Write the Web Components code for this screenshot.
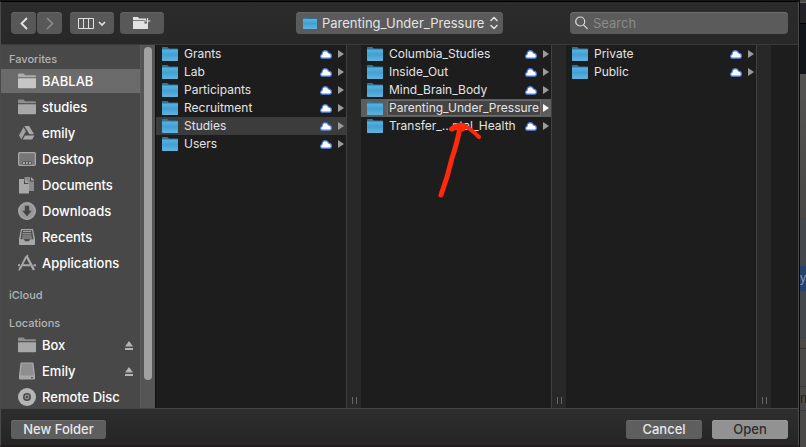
<!DOCTYPE html>
<html lang="en">
<head>
<meta charset="utf-8">
<title>Open</title>
<style>
html, body { margin: 0; height: 100%; background: #151515; }
body { font-family: Inter, "Liberation Sans", sans-serif; font-size: 13px; color: #e4e4e4; }
</style>
</head>
<body>
<open-dialog></open-dialog>
<script>
const base = `*{box-sizing:border-box} button,a,input,select{font:inherit;color:inherit;text-decoration:none;border:0;background:none;padding:0;margin:0;outline:0}svg{display:block;flex:none}`;

const sideFolder = `<svg width="18" height="16" viewBox="0 0 18 16"><path d="M0 1.5Q0 .5 1 .5h4.5l1.5 1.7h10q1 0 1 1v1H0z" fill="currentColor" opacity=".72"/><path d="M0 5.2h18v9q0 1-1 1H1q-1 0-1-1z" fill="currentColor"/></svg>`;
const ICONS = {
  folder: sideFolder,
  drive: `<svg width="18" height="16" viewBox="0 0 18 16"><path d="M6.3 1h4.800l5 8.300h-4.600z" fill="currentColor"/><path d="M5.500 2.200l2.400 4.100-4.600 8.200L1 10.300z" fill="currentColor" opacity=".9"/><path d="M7 10.400h9.500l-2.400 4.200H4.700z" fill="currentColor"/></svg>`,
  desktop: `<svg width="18" height="16" viewBox="0 0 18 16"><rect x=".6" y="1.6" width="16.8" height="12.8" rx="1.2" fill="#777" stroke="currentColor" stroke-width="1.2"/><path d="M4.500 10.500h9v3h-9z" fill="#444"/><path d="M5 11h2v2H5zM8 11h2v2H8zM11 11h2v2h-2z" fill="currentColor"/></svg>`,
  documents: `<svg width="18" height="18" viewBox="0 0 18 18"><path d="M6.500 1H12v4.500h4V15h-5V8.500L7.500 5h-1z" fill="currentColor" opacity=".7"/><path d="M13 1l3.500 3.500H13z" fill="currentColor"/><path d="M1 3h5v5h5v9.500H1z" fill="currentColor"/><path d="M7 3l4 4H7z" fill="currentColor"/></svg>`,
  downloads: `<svg width="18" height="18" viewBox="0 0 18 18"><circle cx="9" cy="9" r="8.300" fill="#999" stroke="currentColor" stroke-width="1.400"/><path d="M6.800 3.800h4.400v5h2.600L9 14.200 4.200 8.800h2.600z" fill="#444"/></svg>`,
  recents: `<svg width="18" height="18" viewBox="0 0 18 18"><path d="M3 1h12l2 10v5q0 1-1 1H2q-1 0-1-1v-5z" fill="currentColor"/><path d="M3.900 2.200h10.200l1.300 9H12l-1 2H7l-1-2H2.600z" fill="#4a4a4a"/><path d="M5 3.600h8M4.600 5.800h8.800M4.300 8h9.400M4 10h10" stroke="currentColor" stroke-width="1"/></svg>`,
  applications: `<svg width="18" height="18" viewBox="0 0 18 18" fill="none" stroke="currentColor"><path d="M8 3L2 15" stroke-width="1.800"/><path d="M8.500 2l6.200 11.500 1.300 2.500" stroke-width="2.400"/><path d="M4.500 11.200h8M0 11.200h2.200M15.500 11.200H18" stroke-width="2"/><path d="M2 13.500L1 16.500M10 1L8 3" stroke-width="1.500"/></svg>`,
  disk: `<svg width="18" height="18" viewBox="0 0 18 18"><path d="M3.500.5h11q1 0 1.100 1L17 13.500v3q0 1-1 1H2q-1 0-1-1v-3L2.400 1.500q.1-1 1.100-1z" fill="currentColor"/><path d="M3.800 1.500h10.400l1.400 12H2.400z" fill="#8e8e8e"/><path d="M13 15.200h2v1h-2z" fill="#444"/></svg>`,
  disc: `<svg width="18" height="18" viewBox="0 0 18 18"><circle cx="9" cy="9" r="9" fill="#b5b5b5"/><circle cx="9" cy="9" r="3.200" fill="#999" stroke="#4a4a4a" stroke-width="1.600"/><circle cx="9" cy="9" r="1.300" fill="#4a4a4a"/></svg>`
};
const blueFolder = (w, h) => `<svg width="${w}" height="${h}" viewBox="0 0 16 14" preserveAspectRatio="none"><defs><linearGradient id="g" x2="0" y2="1"><stop stop-color="#57b4e4"/><stop offset=".45" stop-color="#43a0d3"/><stop offset="1" stop-color="#62b3de"/></linearGradient></defs><path d="M0 .7Q0 0 .7 0h4.600l1.700 1.400h8.300q.7 0 .7.700V4H0z" fill="#2f7598"/><path d="M0 2.400h16V13.300q0 .7-.7.700H.7Q0 14 0 13.300z" fill="url(#g)"/></svg>`;

function define(name, css, html) {
  customElements.define(name, class extends HTMLElement {
    connectedCallback() {
      const t = document.createElement('template');
      t.innerHTML = `<style>${base}${css}</style>${typeof html === 'function' ? html(this) : html}`;
      this.attachShadow({ mode: 'open' }).append(t.content.cloneNode(true));
    }
  });
}

define('push-button', `
:host{display:block}
button{display:flex;align-items:center;justify-content:center;width:100%;min-height:19px;border-radius:3px;background:#5e5e5e;box-shadow:inset 0 1px #6c6c6c;color:#e8e8e8;font-weight:500}
:host([kind=default]) button{background:#929292;box-shadow:inset 0 1px #9c9c9c;color:#2c2c2c}
:host([kind=tool]) button{background:#585858;box-shadow:inset 0 1px #656565;min-height:22px;border-radius:4px}
`, el => `<button type="button" aria-label="${el.getAttribute('label') || el.textContent}"><slot></slot></button>`);

define('path-popup', `
:host{display:block}
label{display:flex;align-items:center;height:22px;gap:5px;padding:0 5px 0 7px;border-radius:4px;background:#5b5b5b;box-shadow:inset 0 1px #676767}
select{appearance:none;width:163px;flex:1}
`, `<label>${blueFolder(14, 12)}<select aria-label="Folder"><option>Parenting_Under_Pressure</option></select><svg width="8" height="14" viewBox="0 0 8 14" fill="none" stroke="#e4e4e4" stroke-width="1.500" stroke-linecap="round" stroke-linejoin="round"><path d="M1 4.500l3-3 3 3M1 9.500l3 3 3-3"/></svg></label>`);

define('search-box', `
:host{display:block}
label{display:flex;align-items:center;height:22px;gap:5px;padding:0 5px;border-radius:4px;background:#5b5b5b;box-shadow:inset 0 1px #707070}
input{flex:1;min-width:0}
input::placeholder{color:#8b8b8b;opacity:1}
`, `<label><svg width="13" height="14" viewBox="0 0 13 14" fill="none" stroke="#ddd" stroke-width="1.200" stroke-linecap="round"><circle cx="5.200" cy="5.500" r="4.500"/><path d="M8.500 8.900l3.800 3.800"/></svg><input type="search" placeholder="Search" aria-label="Search"></label>`);

define('dialog-toolbar', `
:host{display:grid;grid-template-columns:1fr auto 1fr;align-items:center;height:42px;padding:0 10px;background:linear-gradient(#2b2b2b,#282828)}
.tools{display:flex}
.nav{width:25px}.nav+.nav{margin-left:1px}
.wide{width:44px;margin-left:8px}.wide+.wide{margin-left:6px}
search-box{justify-self:end;width:218px}
`, `
<div class="tools">
<push-button class="nav" kind="tool" label="Back"><svg width="8" height="13" viewBox="0 0 8 13" fill="none" stroke="#e6e6e6" stroke-width="1.800"><path d="M7 1L1.500 6.500 7 12"/></svg></push-button>
<push-button class="nav" kind="tool" label="Forward"><svg width="8" height="13" viewBox="0 0 8 13" fill="none" stroke="#8c8c8c" stroke-width="1.600"><path d="M1 1l5.500 5.500L1 12"/></svg></push-button>
<push-button class="wide" kind="tool" label="Column view"><svg width="28" height="11" viewBox="0 0 28 11" fill="none" stroke="#e0e0e0"><path d="M.5.5h15v10H.5zM5.500.5v10M10.500.5v10"/><path d="M21 4l3 3 3-3" stroke-width="1.700"/></svg></push-button>
<push-button class="wide" kind="tool" label="New folder"><svg width="18" height="12" viewBox="0 0 18 12"><path d="M0 0h5l1 1.500h7v1.700H0zM0 4h11.500v2.500H15V12H0z" fill="#e2e2e2"/><path d="M14.500 1v6M11.500 4h6" stroke="#e2e2e2" stroke-width="1.200"/></svg></push-button>
</div>
<path-popup></path-popup>
<search-box></search-box>`);

define('side-item', `
:host{display:block;padding:1px 0}
a{display:flex;align-items:center;height:24px;padding:0 7px 0 17px;color:#fff;font-weight:500}
.icon{display:grid;place-items:center;width:18px;margin-right:6px;color:#a8a8a8}
.name{flex:1;white-space:nowrap}
:host([selected]) a{background:#6b6b6b}
:host([selected]) .icon{color:#c6c6c6}
`, el => `<a href="#"><span class="icon">${ICONS[el.getAttribute('icon')]}</span><span class="name"><slot></slot></span>${el.hasAttribute('eject') ? '<svg width="8" height="9" viewBox="0 0 8 9" fill="#b4b4b4"><path d="M4 0l4 5.500H0zM0 7h8v2H0z"/></svg>' : ''}</a>`);

define('side-group', `
:host{display:block}
h2{margin:0;padding:8px 8px 2px;font-size:11px;line-height:14px;font-weight:500;color:#b4b4b4}
:host([first]) h2{padding-top:7px}
`, el => `<h2>${el.getAttribute('label')}</h2><slot></slot>`);

define('side-bar', `
:host{display:flex;min-height:0;overflow:hidden;background:#484848;border-right:1px solid #111}
nav{flex:1;display:flex;flex-direction:column;border-right:1px solid #5c5c5c}
.track{width:14px;padding:2px 3px 28px;background:#555}
.thumb{height:100%;border-radius:4px;background:#a1a1a1}
side-group{flex:none}
.cloud{margin:4px 0}
`, `
<nav aria-label="Sidebar">
<side-group label="Favorites" first>
<side-item icon="folder" selected>BABLAB</side-item>
<side-item icon="folder">studies</side-item>
<side-item icon="drive">emily</side-item>
<side-item icon="desktop">Desktop</side-item>
<side-item icon="documents">Documents</side-item>
<side-item icon="downloads">Downloads</side-item>
<side-item icon="recents">Recents</side-item>
<side-item icon="applications">Applications</side-item>
</side-group>
<side-group class="cloud" label="iCloud"></side-group>
<side-group label="Locations">
<side-item icon="folder" eject>Box</side-item>
<side-item icon="disk" eject>Emily</side-item>
<side-item icon="disc">Remote Disc</side-item>
</side-group>
</nav>
<div class="track"><div class="thumb"></div></div>`);

define('file-row', `
:host{display:block;font-size:12px}
button{display:flex;align-items:center;width:100%;height:18px;padding:0 2px 0 6px;text-align:left}
:host([open]) button{background:#3c3c3c}
:host([current]) button{background:#5d5d5d}
.name{flex:1;min-width:0;margin-left:4px;padding:0 2px;line-height:18px;white-space:nowrap}
:host([current]) .name{margin-right:2px;line-height:16px;background:#444;box-shadow:inset 0 0 0 1px #6b6b6b}
.cloud{margin-right:6px}
.more{fill:#9b9b9b}
:host([current]) .more{fill:#fff}
`, el => `<button type="button">${blueFolder(16, 14)}<span class="name"><slot></slot></span>${el.hasAttribute('current') ? '' : '<svg class="cloud" width="12" height="9" viewBox="0 0 12 9"><path d="M2.600 8.200Q.6 8.200.6 6.300.6 4.800 2 4.400 2.200.8 5.400.7 7.800.7 8.500 3q2.800.3 2.900 2.900 0 2.300-2.300 2.300z" fill="#fff" stroke="#4a7fe0" stroke-width="1.200"/></svg>'}<svg class="more" width="6" height="8" viewBox="0 0 6 8"><path d="M0 0l6 4-6 4z"/></svg></button>`);

define('file-column', `
:host{display:flex;min-width:0}
.rows{flex:1;min-width:0}
.handle{display:flex;align-items:flex-end;justify-content:center;width:15px;padding-bottom:4px;border-left:1px solid #414141;background:#282828}
`, `<div class="rows"><slot></slot></div><div class="handle"><svg width="5" height="7"><path d="M.5 0v7M4.500 0v7" stroke="#666"/></svg></div>`);

define('file-browser', `
:host{display:flex;position:relative;min-width:0;min-height:0;overflow:hidden;background:#1d1d1d}
file-column{flex:205 1 0}
.rest{flex:27 1 0}
.mark{position:absolute;left:281px;top:77px}
`, `
<file-column><file-row>Grants</file-row><file-row>Lab</file-row><file-row>Participants</file-row><file-row>Recruitment</file-row><file-row open>Studies</file-row><file-row>Users</file-row></file-column>
<file-column><file-row>Columbia_Studies</file-row><file-row>Inside_Out</file-row><file-row>Mind_Brain_Body</file-row><file-row current>Parenting_Under_Pressure</file-row><file-row>Transfer_...ntal_Health</file-row></file-column>
<file-column><file-row>Private</file-row><file-row>Public</file-row></file-column>
<div class="rest"></div>
<svg class="mark" width="46" height="78" viewBox="438 122 46 78" fill="none" stroke="#ff2a0c" stroke-linecap="round" stroke-linejoin="round"><path d="M461 128Q457 147 453 158 449 176 442 195" stroke-width="5"/><path d="M452 129Q457 124 464 125 471 128 480 137" stroke-width="4"/><path d="M453 129Q458 126 464 129" stroke-width="5"/></svg>`);

define('dialog-footer', `
:host{display:flex;align-items:center;height:37px;box-sizing:border-box;gap:10px;padding:0 10px;border-top:1px solid #464646;background:linear-gradient(#2e2e2e,#252525)}
.new{width:95px;margin-right:auto}
.action{width:76px}
push-button{padding-top:4px}
`, `<push-button class="new">New Folder</push-button><push-button class="action">Cancel</push-button><push-button class="action" kind="default">Open</push-button>`);

define('page-behind', `
:host{display:flex;flex-direction:column;overflow:hidden;padding-top:2px;background:#4a4948;border-left:1px solid #0b0b0b;font:14px "Liberation Sans",sans-serif;color:#222}
div{box-sizing:border-box;flex:none}
.top{height:22px;background:#212126;border-top:1px solid #666;border-bottom:1px solid #000}
.bar{height:50px;background:#12161a}
.page{height:145px;background:linear-gradient(#555351,#494745)}
.blue{height:47px;background:#44474c;border-top:1px solid #3a4656}
.sel{height:25px;font-size:12px;line-height:25px;background:#25416e;color:#8b97aa}
.low{height:47px;background:#44474c;border-bottom:1px solid #35445a}
.line{height:11px;border-bottom:1px solid #333}
.text{height:38px;border-bottom:1px solid #3c3c3c}
.last{height:24px;line-height:22px;border-bottom:1px solid #3c3c3c}
`, `<div class="top"></div><div class="bar"></div><div class="page"></div><div class="blue"></div><div class="sel">y</div><div class="low"></div><div class="line"></div><div class="text"></div><div class="last">m</div>`);

define('open-dialog', `
:host{display:grid;grid-template-columns:1fr 7px;height:100vh;overflow:hidden}
main{display:grid;grid-template-rows:42px 1fr auto;min-width:0;min-height:0;margin-top:1px;border:solid #4a4a4a;border-width:0 1px;border-top:1px solid #000;border-bottom:2px solid #231c1e}
.body{display:grid;grid-template-columns:155px 1fr;min-height:0;border-top:1px solid #3a3a3a}
`, `<main><dialog-toolbar></dialog-toolbar><div class="body"><side-bar></side-bar><file-browser></file-browser></div><dialog-footer></dialog-footer></main><page-behind></page-behind>`);
</script>
</body>
</html>
